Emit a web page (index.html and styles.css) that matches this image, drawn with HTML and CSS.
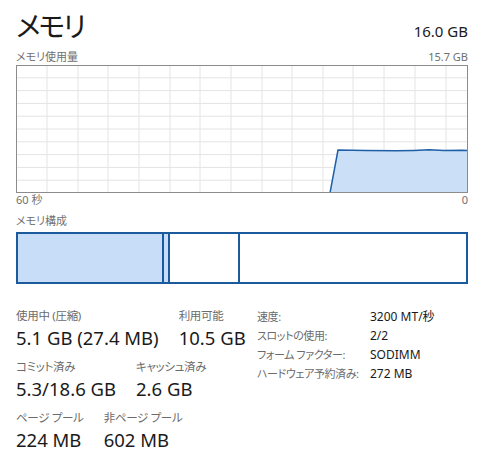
FILE: index.html
```html
<!DOCTYPE html>
<html lang="ja">
<head>
    <meta charset="UTF-8">
    <meta name="viewport" content="width=device-width, initial-scale=1.0">
    <title>メモリ</title>
    <link rel="stylesheet" href="styles.css">
</head>
<body>
    <div class="header">
        <h1 class="title">メモリ</h1>
        <div class="total">16.0 GB</div>
    </div>

    <div class="caption">
        <span>メモリ使用量</span>
        <span>15.7 GB</span>
    </div>
    <svg class="graph" width="452" height="128" viewBox="0 0 452 128">
        <g class="grid">
            <line x1="31" y1="0" x2="31" y2="128"/>
            <line x1="62" y1="0" x2="62" y2="128"/>
            <line x1="92" y1="0" x2="92" y2="128"/>
            <line x1="123" y1="0" x2="123" y2="128"/>
            <line x1="154" y1="0" x2="154" y2="128"/>
            <line x1="184" y1="0" x2="184" y2="128"/>
            <line x1="215" y1="0" x2="215" y2="128"/>
            <line x1="246" y1="0" x2="246" y2="128"/>
            <line x1="276" y1="0" x2="276" y2="128"/>
            <line x1="307" y1="0" x2="307" y2="128"/>
            <line x1="337" y1="0" x2="337" y2="128"/>
            <line x1="368" y1="0" x2="368" y2="128"/>
            <line x1="399" y1="0" x2="399" y2="128"/>
            <line x1="430" y1="0" x2="430" y2="128"/>
            <line x1="0" y1="12.8" x2="452" y2="12.8"/>
            <line x1="0" y1="25.6" x2="452" y2="25.6"/>
            <line x1="0" y1="38.4" x2="452" y2="38.4"/>
            <line x1="0" y1="51.2" x2="452" y2="51.2"/>
            <line x1="0" y1="64" x2="452" y2="64"/>
            <line x1="0" y1="76.8" x2="452" y2="76.8"/>
            <line x1="0" y1="89.6" x2="452" y2="89.6"/>
            <line x1="0" y1="102.4" x2="452" y2="102.4"/>
            <line x1="0" y1="115.2" x2="452" y2="115.2"/>
        </g>
        <path class="area" d="M314 128 L322 85 L350 85.6 L380 85.8 L398 85.4 L413 84.8 L428 85.6 L446 85.3 L452 85.6 L452 128 Z"/>
        <path class="line" d="M314 128 L322 85 L350 85.6 L380 85.8 L398 85.4 L413 84.8 L428 85.6 L446 85.3 L452 85.6"/>
        <rect class="frame" x="0.5" y="0.5" width="451" height="127"/>
    </svg>
    <div class="caption">
        <span>60 秒</span>
        <span>0</span>
    </div>

    <div class="caption section">メモリ構成</div>
    <div class="composition">
        <div class="part in-use" style="width: 144px"></div>
        <div class="part modified" style="width: 4px"></div>
        <div class="part standby" style="width: 68px"></div>
        <div class="part free"></div>
    </div>

    <div class="details">
        <div class="stats">
            <div class="stat-row">
                <div class="stat">
                    <div class="label">使用中 (圧縮)</div>
                    <div class="value">5.1 GB (27.4 MB)</div>
                </div>
                <div class="stat">
                    <div class="label">利用可能</div>
                    <div class="value">10.5 GB</div>
                </div>
            </div>
            <div class="stat-row">
                <div class="stat">
                    <div class="label">コミット済み</div>
                    <div class="value">5.3/18.6 GB</div>
                </div>
                <div class="stat">
                    <div class="label">キャッシュ済み</div>
                    <div class="value">2.6 GB</div>
                </div>
            </div>
            <div class="stat-row">
                <div class="stat">
                    <div class="label">ページ プール</div>
                    <div class="value">224 MB</div>
                </div>
                <div class="stat">
                    <div class="label">非ページ プール</div>
                    <div class="value">602 MB</div>
                </div>
            </div>
        </div>

        <table class="specs">
            <tr><th>速度:</th><td>3200 MT/秒</td></tr>
            <tr><th>スロットの使用:</th><td>2/2</td></tr>
            <tr><th>フォーム ファクター:</th><td>SODIMM</td></tr>
            <tr><th>ハードウェア予約済み:</th><td>272 MB</td></tr>
        </table>
    </div>
</body>
</html>
```

FILE: styles.css
```css
body {
    margin: 0;
    padding: 0 20px 0 16px;
    background-color: #ffffff;
    color: #1a1a1a;
    font-family: "Noto Sans", "Noto Sans CJK JP", sans-serif;
    font-feature-settings: "palt";
}

.header {
    display: flex;
    justify-content: space-between;
    align-items: baseline;
    margin-top: 8px;
}

.title {
    margin: 0;
    font-size: 28px;
    font-weight: normal;
    line-height: 36px;
    letter-spacing: -2px;
}

.total {
    font-size: 15px;
}

.caption {
    display: flex;
    justify-content: space-between;
    font-size: 11px;
    line-height: 14px;
    color: #707070;
}

.header + .caption {
    margin-top: 6px;
    margin-bottom: 1px;
}

.graph {
    display: block;
}

.grid line {
    stroke: #e4e4e4;
    stroke-width: 1;
}

.area {
    fill: #cbdff7;
}

.line {
    fill: none;
    stroke: #1f5fa8;
    stroke-width: 1.5;
}

.frame {
    fill: none;
    stroke: #8c8c8c;
    stroke-width: 1;
}

.section {
    margin-top: 7px;
}

/* Memory composition bar */
.composition {
    display: flex;
    height: 52px;
    margin-top: 4px;
    border: 2px solid #1c5a9e;
    box-sizing: border-box;
}

.part {
    height: 100%;
    border-right: 2px solid #1c5a9e;
}

.in-use, .modified {
    background-color: #c8ddf7;
}

.free {
    flex: 1;
    border-right: none;
}

/* Stats */
.details {
    display: flex;
    align-items: flex-start;
    margin-top: 23px;
}

.stats {
    display: flex;
    flex-direction: column;
    gap: 7px;
    width: 241px;
}

.stat-row {
    display: flex;
    gap: 20px;
}

.label {
    font-size: 11.5px;
    line-height: 18px;
    letter-spacing: -0.3px;
    white-space: nowrap;
    color: #6b6b6b;
}

.value {
    font-size: 18.5px;
    line-height: 26px;
    white-space: nowrap;
}

.specs {
    border-collapse: collapse;
    font-size: 12px;
}

.specs th {
    padding: 0;
    width: 113px;
    text-align: left;
    font-size: 11px;
    font-weight: normal;
    line-height: 19px;
    letter-spacing: -0.4px;
    white-space: nowrap;
    color: #6b6b6b;
}

.specs td {
    padding: 0;
    line-height: 19px;
    white-space: nowrap;
    color: #1a1a1a;
}
```
